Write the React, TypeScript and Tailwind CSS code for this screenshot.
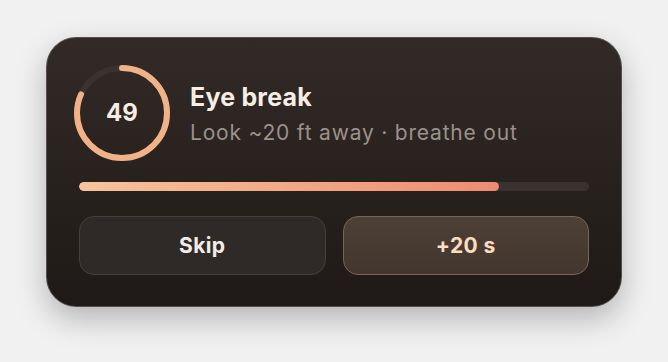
const TOTAL = 60
const LEFT = 49

function Ring({value, total}: {value: number; total: number}) {
  const r = 45
  const c = 2 * Math.PI * r
  const done = (value / total) * c
  return (
    <div className="relative -ml-[5px] h-[96px] w-[96px] shrink-0">
      <svg width="96" height="96" viewBox="0 0 96 96" className="-rotate-90">
        <circle cx="48" cy="48" r={r} fill="none" stroke="#3a3230" strokeWidth="6" />
        <circle
          cx="48"
          cy="48"
          r={r}
          fill="none"
          stroke="#f0b286"
          strokeWidth="6"
          strokeLinecap="round"
          strokeDasharray={`${done} ${c}`}
        />
      </svg>
      <div className="absolute inset-0 flex items-center justify-center text-[24px] font-bold text-[#f7ede4]">
        {value}
      </div>
    </div>
  )
}

export default function App() {
  return (
    <div
      className="h-[362px] w-[668px] bg-[#f1f1f1] pl-[46px] pt-[37px]"
      style={{fontFamily: "Inter, 'Noto Sans', sans-serif"}}>
      <div className="flex h-[270px] w-[576px] flex-col rounded-[30px] border-[1.5px] border-[#55504d] bg-gradient-to-b from-[#322a27] to-[#1f1a17] px-8 pt-[27px] shadow-[0_12px_30px_rgba(0,0,0,0.25)]">
        <div className="flex items-center gap-5">
          <Ring value={LEFT} total={TOTAL} />
          <div className="flex flex-col pt-[1px]">
            <div className="text-[25px] font-bold leading-[30px] tracking-[0.2px] text-[#f7ede4]">
              Eye break
            </div>
            <div className="mt-[8px] text-[21px] leading-[26px] tracking-[0.8px] text-[#9c918a]">
              Look ~20 ft away · breathe out
            </div>
          </div>
        </div>
        <div className="mt-[21px] h-[9px] w-full overflow-hidden rounded-full bg-[#3a3230]">
          <div
            className="h-full rounded-full bg-gradient-to-r from-[#f6c39d] to-[#ee8a74]"
            style={{width: `${(422 / 512) * 100}%`}}
          />
        </div>
        <div className="mt-[25px] grid grid-cols-2 gap-[17px]">
          <button className="h-[59px] rounded-[15px] border border-[#45403d] bg-[#2f2a28] text-[21px] font-bold tracking-[0.4px] text-[#f3ece6]">
            Skip
          </button>
          <button className="h-[59px] rounded-[15px] border border-[#7c6453] bg-gradient-to-b from-[#4d4036] to-[#42362e] text-[21px] font-bold tracking-[0.4px] text-[#fbdcc3]">
            +20 s
          </button>
        </div>
      </div>
    </div>
  )
}
